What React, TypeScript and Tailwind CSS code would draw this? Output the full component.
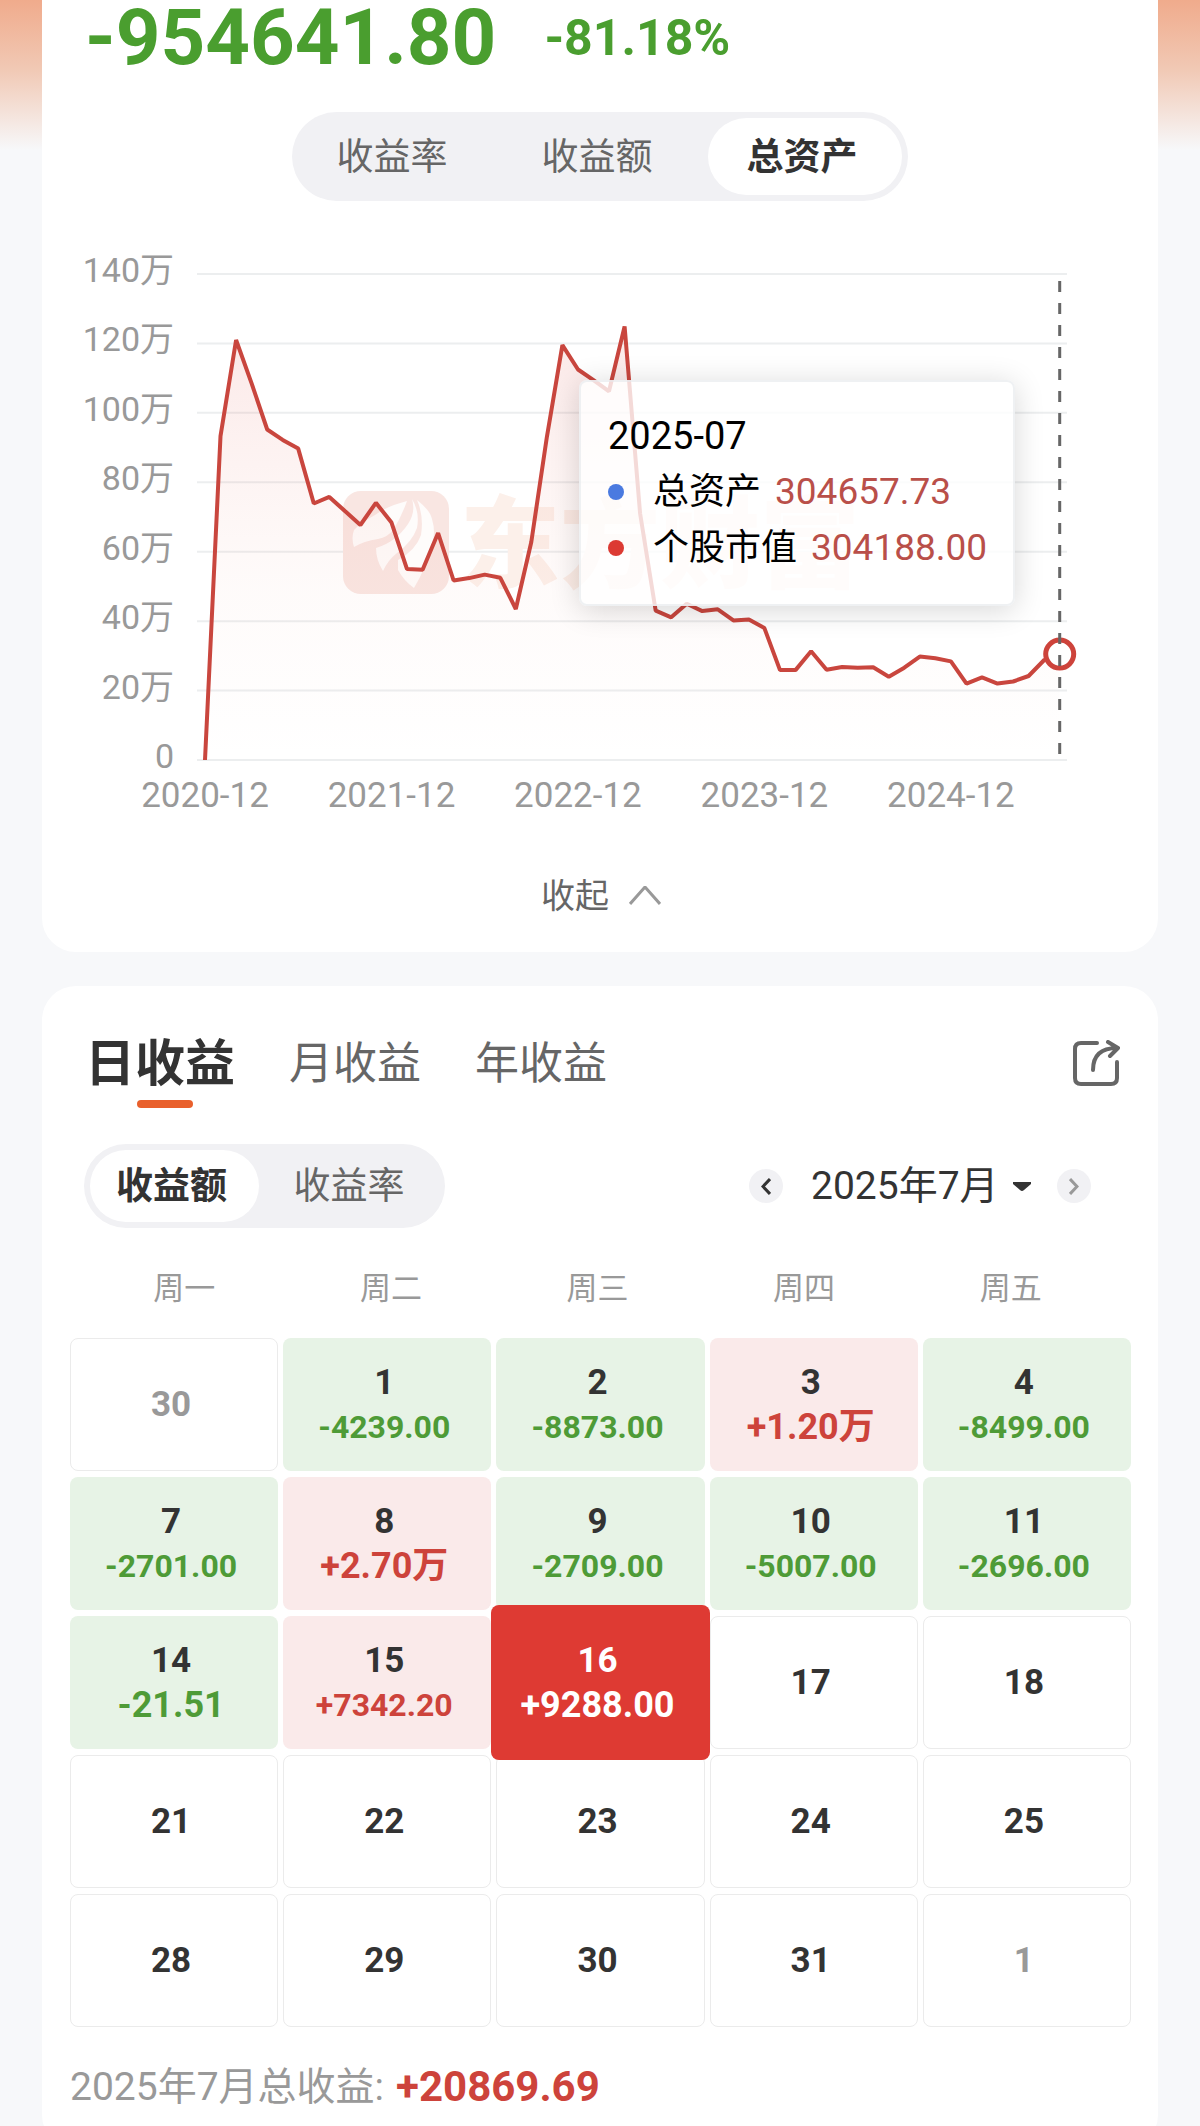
import { useState } from "react";

type Day = {
  day: number;
  amount?: string;
  outside?: boolean;
};

const assets = [
  0, 93.3, 121, 108.5, 95.2, 92.2, 89.7, 73.9, 75.8, 71.7, 67.7, 74.1, 68.4, 55, 54.8, 65.4, 51.7, 52.4, 53.4, 52.5,
  43.5, 62.8, 93.1, 119.5, 112.5, 109.4, 106.2, 124.9, 71, 43, 41.1, 45, 42.9, 43.4, 40.2, 40.5, 38, 25.9, 25.9, 31.3,
  26, 26.8, 26.6, 26.7, 24, 26.6, 29.8, 29.3, 28.4, 22, 23.8, 22, 22.6, 24.2, 28.8, 30.5,
];

const days: Day[] = [
  { day: 30, outside: true },
  { day: 1, amount: "-4239.00" },
  { day: 2, amount: "-8873.00" },
  { day: 3, amount: "+1.20万" },
  { day: 4, amount: "-8499.00" },
  { day: 7, amount: "-2701.00" },
  { day: 8, amount: "+2.70万" },
  { day: 9, amount: "-2709.00" },
  { day: 10, amount: "-5007.00" },
  { day: 11, amount: "-2696.00" },
  { day: 14, amount: "-21.51" },
  { day: 15, amount: "+7342.20" },
  { day: 16, amount: "+9288.00" },
  { day: 17 },
  { day: 18 },
  { day: 21 },
  { day: 22 },
  { day: 23 },
  { day: 24 },
  { day: 25 },
  { day: 28 },
  { day: 29 },
  { day: 30 },
  { day: 31 },
  { day: 1, outside: true },
];

const weekdays = ["周一", "周二", "周三", "周四", "周五"];
const yTicks = [140, 120, 100, 80, 60, 40, 20, 0];
const xTicks = ["2020-12", "2021-12", "2022-12", "2023-12", "2024-12"];

// chart geometry, in viewBox units
const LEFT = 163;
const STEP = 15.54;
const TOP = 24;
const BOTTOM = 510;

const px = (i: number) => LEFT + i * STEP;
const py = (v: number) => BOTTOM - (v / 140) * (BOTTOM - TOP);

function AssetChart() {
  const line = assets.map((v, i) => `${px(i).toFixed(1)},${py(v).toFixed(1)}`).join(" ");
  const last = assets.length - 1;
  const lastX = px(last);

  return (
    <svg viewBox="0 0 1116 570" className="block w-full" role="img" aria-label="总资产">
      <defs>
        <linearGradient id="area" x1="0" y1="0" x2="0" y2="1">
          <stop offset="0" stopColor="#e0403a" stopOpacity="0.12" />
          <stop offset="0.6" stopColor="#e8705a" stopOpacity="0.03" />
          <stop offset="1" stopColor="#e8705a" stopOpacity="0" />
        </linearGradient>
      </defs>

      {yTicks.map(t => (
        <g key={t}>
          <line x1="155" x2="1025" y1={py(t)} y2={py(t)} stroke="#eceeef" strokeWidth="2" />
          <text x="132" y={py(t) + 8} textAnchor="end" fontSize="34" fill="#999">
            {t === 0 ? "0" : `${t}万`}
          </text>
        </g>
      ))}
      {xTicks.map((t, i) => (
        <text key={t} x={px(i * 12)} y="557" textAnchor="middle" fontSize="35" fill="#999">
          {t}
        </text>
      ))}

      <g>
        <rect x="301" y="241" width="106" height="103" rx="18" fill="#f9e6e2" />
        <g fill="#fff" fillOpacity="0.85">
          <path d="M365 251 Q345 256 333 265 Q318 273 312 280 Q309 288 312 297 Q322 291 336 289 Q346 287 351 280 Q359 268 365 251 Z" />
          <path d="M370 249 Q374 262 366 274 Q354 292 334 298 Q334 310 341 321 Q346 310 355 303 Q370 292 375 278 Q378 262 370 249 Z" />
          <path d="M375 250 Q388 260 390 269 Q394 282 390 295 Q384 318 372 338 Q362 331 356 320 V310 Q374 300 379 285 Q382 266 375 250 Z" />
        </g>
        <text x="418" y="330" fontSize="100" fontWeight="900" fill="#fcf0ea">
          东方财富
        </text>
      </g>

      <polygon points={`${px(0)},${BOTTOM} ${line} ${lastX},${BOTTOM}`} fill="url(#area)" />
      <polyline points={line} fill="none" stroke="#c9463e" strokeWidth="4" strokeLinejoin="bevel" />
      <circle cx={lastX} cy={py(assets[last])} r="14" fill="#fff" stroke="#cd433b" strokeWidth="5" />
      <line x1={lastX} x2={lastX} y1="31" y2={BOTTOM} stroke="#666" strokeWidth="3" strokeDasharray="11 11" />
    </svg>
  );
}

function Tooltip() {
  const rows = [
    { label: "总资产", value: "304657.73", dot: "bg-[#4a7ae0]" },
    { label: "个股市值", value: "304188.00", dot: "bg-[#dc3a33]" },
  ];
  return (
    <div className="absolute right-[143px] top-[130px] h-[226px] w-[436px] rounded-lg border-2 border-gray-200/60 bg-white/80 px-[27px] pt-[26px] shadow-[0_4px_30px_rgba(0,0,0,0.16)]">
      <div className="text-[38px] leading-[56px] text-black">2025-07</div>
      {rows.map(r => (
        <div key={r.label} className="flex items-center whitespace-nowrap leading-[56px]">
          <span className={`mr-[29px] size-4 shrink-0 rounded-full ${r.dot}`}></span>
          <span className="mr-3.5 text-[36px] text-black">{r.label}</span>
          <span className="text-[37px] text-[#b94f49]">{r.value}</span>
        </div>
      ))}
    </div>
  );
}

function DayCell({ item, selected, onSelect }: { item: Day; selected: boolean; onSelect: () => void }) {
  const gain = item.amount?.startsWith("+");
  let tone = "border border-[#ebebeb] text-[#333]";
  if (item.outside) tone = "border border-[#ebebeb] text-[#999]";
  if (item.amount) tone = gain ? "bg-[#faeaea] text-[#333]" : "bg-[#e7f3e6] text-[#333]";
  if (selected) tone = "z-10 -mx-[5px] -my-[11px] bg-[#de3a33] text-white";

  let amountColor = gain ? "text-[#cd433b]" : "text-[#4e9b37]";
  if (selected) amountColor = "text-white";
  const long = (item.amount?.length ?? 0) > 7 && !selected;

  return (
    <button
      onClick={onSelect}
      className={`flex flex-col items-center justify-center rounded-lg pr-1.5 font-bold ${tone}`}
    >
      <span className="text-[35px] leading-[44px]">{item.day}</span>
      {item.amount && (
        <span className={`leading-[44px] ${long ? "text-[32px]" : "text-[36px]"} ${amountColor}`}>{item.amount}</span>
      )}
    </button>
  );
}

export default function App() {
  const [metric, setMetric] = useState("总资产");
  const [period, setPeriod] = useState("日收益");
  const [unit, setUnit] = useState("收益额");
  const [selected, setSelected] = useState(12);

  return (
    <div className="min-h-screen bg-[#f7f8fa] bg-[linear-gradient(#f0ab8c,#f1c9b5_70px,#f7f8fa_150px)] bg-no-repeat px-[42px] font-[Roboto,'Noto_Sans_CJK_SC',sans-serif] text-[#333]">
      <section className="rounded-b-[34px] bg-white">
        <div className="flex items-center gap-12 pl-[43px] font-bold leading-[76px] text-[#4a9e2f]">
          <span className="text-[78px]">-954641.80</span>
          <span className="text-[50px]">-81.18%</span>
        </div>

        <div className="mx-auto mt-9 flex h-[89px] w-[616px] justify-between rounded-full bg-[#f1f1f4] p-1.5">
          {["收益率", "收益额", "总资产"].map(name => (
            <button
              key={name}
              onClick={() => setMetric(name)}
              className={`w-[194px] rounded-full pr-1.5 pt-0.5 text-[37px] ${
                metric === name ? "bg-white font-bold text-[#333]" : "text-[#666]"
              }`}
            >
              {name}
            </button>
          ))}
        </div>

        <div className="relative mt-[49px]">
          <AssetChart />
          <Tooltip />
        </div>

        <button className="mx-auto flex items-center gap-5 pb-8 pl-0.5 pt-[52px] text-[34px] leading-[48px] text-[#666]">
          收起
          <svg width="32" height="20" viewBox="0 0 32 20" fill="none" stroke="#999" strokeWidth="3">
            <path d="M1 18 L16 1 L31 18" />
          </svg>
        </button>
      </section>

      <section className="mt-[34px] rounded-[34px] bg-white pb-[34px] pt-10">
        <div className="flex items-center justify-between pl-[43px] pr-[38px]">
          <div className="flex items-center gap-[54px]">
            {["日收益", "月收益", "年收益"].map(name => (
              <button
                key={name}
                onClick={() => setPeriod(name)}
                className={`relative pt-0.5 leading-[72px] ${
                  period === name ? "text-[50px] font-bold text-[#333]" : "text-[44px] text-[#666]"
                }`}
              >
                {name}
                {period === name && (
                  <span className="absolute -bottom-2 left-[52px] h-2 w-14 rounded-full bg-[#e9602c]"></span>
                )}
              </button>
            ))}
          </div>
          <button aria-label="分享">
            <svg width="47" height="47" viewBox="0 0 47 47" fill="none" stroke="#666" strokeWidth="4" strokeLinecap="round">
              <path d="M24 3 H8 Q2 3 2 9 V38 Q2 44 8 44 H38 Q44 44 44 38 V22" />
              <path d="M20 30 C20 16 27 8 44 8 M35 2 L45 8 L37 16" strokeLinejoin="round" />
            </svg>
          </button>
        </div>

        <div className="mt-11 flex items-center justify-between pl-[42px] pr-[67px]">
          <div className="flex h-[84px] w-[361px] rounded-full bg-[#f1f1f4] p-1.5">
            {["收益额", "收益率"].map(name => (
              <button
                key={name}
                onClick={() => setUnit(name)}
                className={`w-[169px] rounded-full pr-1.5 pt-0.5 text-[37px] last:grow last:pr-0 ${
                  unit === name ? "bg-white font-bold text-[#333]" : "text-[#666]"
                }`}
              >
                {name}
              </button>
            ))}
          </div>

          <div className="flex items-center">
            <button aria-label="上个月" className="flex size-[34px] items-center justify-center rounded-full bg-[#f1f1f4]">
              <svg width="10" height="17" viewBox="0 0 10 17" fill="none" stroke="#333" strokeWidth="3">
                <path d="M9 1 L2 8.5 L9 16" />
              </svg>
            </button>
            <div className="relative ml-7 mr-[26px]">
              <select
                aria-label="月份"
                className="block appearance-none bg-transparent pr-8 text-[39px] leading-[56px] text-[#333]"
              >
                <option>2025年7月</option>
              </select>
              <svg width="18" height="9" viewBox="0 0 18 9" className="pointer-events-none absolute right-0 top-6">
                <path d="M0 0 H18 V2 L11 8 Q9 10 7 8 L0 2 Z" fill="#333" />
              </svg>
            </div>
            <button aria-label="下个月" className="flex size-[34px] items-center justify-center rounded-full bg-[#f1f1f4]">
              <svg width="10" height="17" viewBox="0 0 10 17" fill="none" stroke="#999" strokeWidth="3">
                <path d="M1 1 L8 8.5 L1 16" />
              </svg>
            </button>
          </div>
        </div>

        <div className="mt-9 grid grid-cols-5 pl-[39px] pr-11 text-center text-[31px] leading-[50px] text-[#999]">
          {weekdays.map(w => (
            <div key={w}>{w}</div>
          ))}
        </div>

        <div className="mt-6 grid auto-rows-[133px] grid-cols-5 gap-x-[5px] gap-y-1.5 pl-7 pr-[27px]">
          {days.map((d, i) => (
            <DayCell key={i} item={d} selected={i === selected} onSelect={() => setSelected(i)} />
          ))}
        </div>

        <div className="mt-8 flex items-center gap-3 px-7 leading-[56px]">
          <span className="text-[39px] text-[#999]">2025年7月总收益:</span>
          <span className="text-[42px] font-bold text-[#cd433b]">+20869.69</span>
        </div>
      </section>
    </div>
  );
}
